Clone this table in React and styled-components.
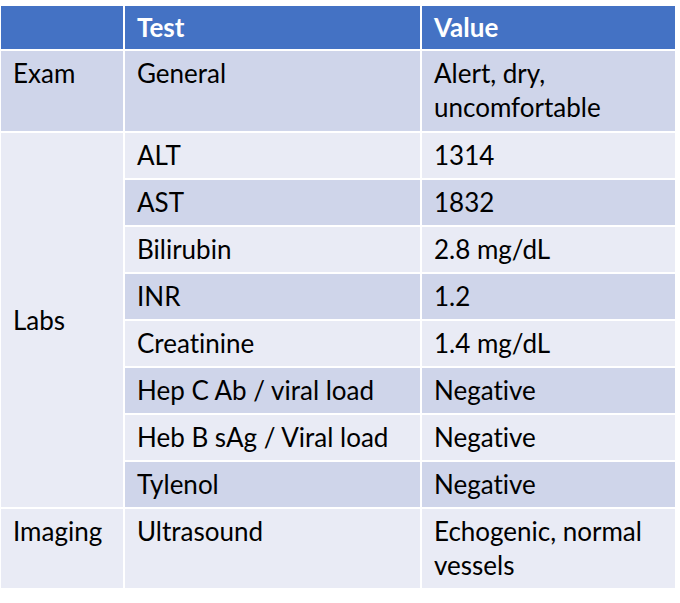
import React from 'react';
import styled, { createGlobalStyle } from 'styled-components';

const GlobalStyle = createGlobalStyle`
  body {
    margin: 0;
    background: #ffffff;
    font-family: Lato, 'Open Sans', sans-serif;
    font-variant-ligatures: none;
  }
`;

const rows = [
  { test: 'ALT', value: '1314', tone: 'light' },
  { test: 'AST', value: '1832', tone: 'dark' },
  { test: 'Bilirubin', value: '2.8 mg/dL', tone: 'light' },
  { test: 'INR', value: '1.2', tone: 'dark' },
  { test: 'Creatinine', value: '1.4 mg/dL', tone: 'light' },
  { test: 'Hep C Ab / viral load', value: 'Negative', tone: 'dark' },
  { test: 'Heb B sAg / Viral load', value: 'Negative', tone: 'light' },
  { test: 'Tylenol', value: 'Negative', tone: 'dark' },
];

const App = () => {
  return (
    <Page>
      <GlobalStyle />
      <Table>
        <HeadCell />
        <HeadCell>Test</HeadCell>
        <HeadCell>Value</HeadCell>

        <Cell $tone='dark'>Exam</Cell>
        <Cell $tone='dark'>General</Cell>
        <Cell $tone='dark'>Alert, dry, uncomfortable</Cell>

        <Cell $tone='light' $span={rows.length} $center>
          Labs
        </Cell>
        {rows.map((r) => (
          <React.Fragment key={r.test}>
            <Cell $tone={r.tone}>{r.test}</Cell>
            <Cell $tone={r.tone}>{r.value}</Cell>
          </React.Fragment>
        ))}

        <Cell $tone='light'>Imaging</Cell>
        <Cell $tone='light'>Ultrasound</Cell>
        <Cell $tone='light'>Echogenic, normal vessels</Cell>
      </Table>
    </Page>
  );
};

export default App;

const Page = styled.div`
  padding: 6px 0 0 1px;
`;

const Table = styled.div`
  display: grid;
  width: 674px;
  grid-template-columns: 122px 295px 253px;
  grid-template-rows: 43px 80px repeat(8, 45px) 79px;
  gap: 2px;
  background: #ffffff;
`;

const HeadCell = styled.div`
  background: #4472c4;
  color: #ffffff;
  font-weight: 700;
  font-size: 26px;
  line-height: 34px;
  padding: 4px 12px 0;
`;

const Cell = styled.div`
  background: ${(p) => (p.$tone === 'dark' ? '#cfd5ea' : '#e9ebf5')};
  color: #000000;
  font-size: 26px;
  line-height: 34px;
  padding: 5px 12px 0;
  grid-row: ${(p) => (p.$span ? `span ${p.$span}` : 'auto')};
  display: ${(p) => (p.$center ? 'flex' : 'block')};
  align-items: center;
  padding-top: ${(p) => (p.$center ? '0' : '5px')};
`;
